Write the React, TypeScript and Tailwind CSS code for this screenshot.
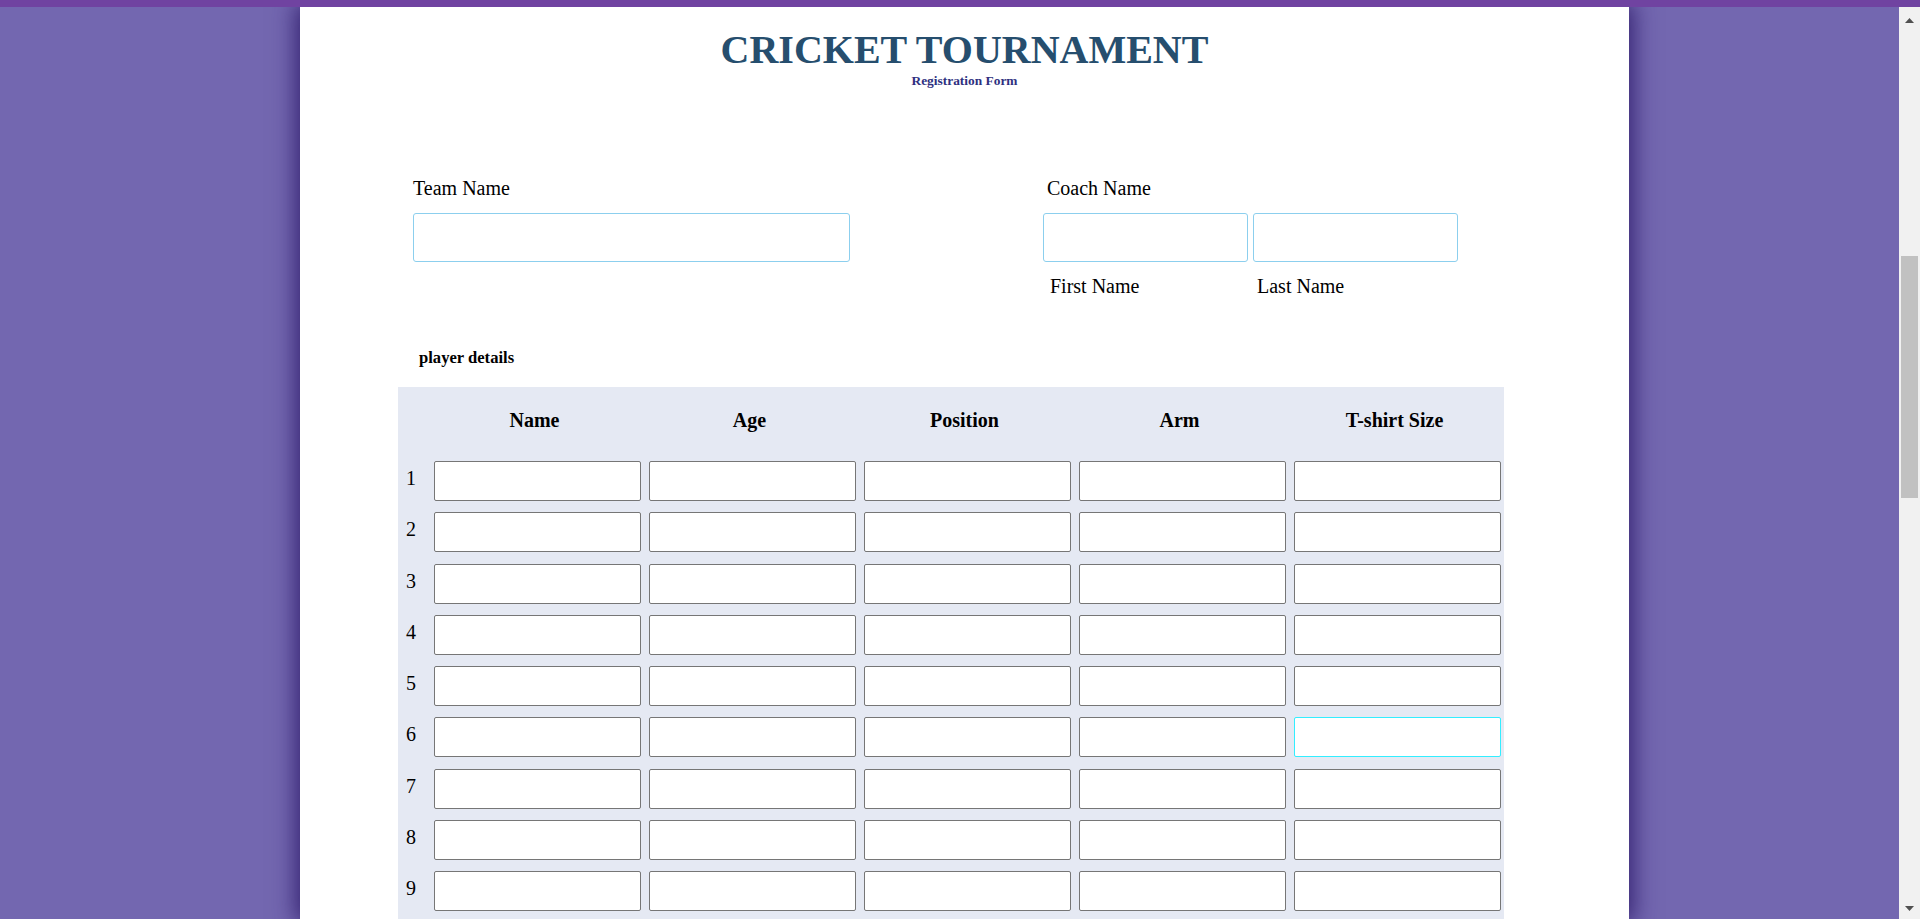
import React from "react";

const columns = ["Name", "Age", "Position", "Arm", "T-shirt Size"];
const rows = [1, 2, 3, 4, 5, 6, 7, 8, 9];

function Scrollbar() {
  return (
    <div className="relative w-[21px] shrink-0 bg-[#f1f1f1]">
      {/* up arrow */}
      <svg className="absolute left-[6px] top-[11px]" width="9" height="5" viewBox="0 0 9 5">
        <polygon points="0,5 4.5,0 9,5" fill="#505050" />
      </svg>
      {/* thumb */}
      <div className="absolute left-[2px] top-[249px] h-[242px] w-[17px] bg-[#c1c1c1]" />
      {/* down arrow */}
      <svg className="absolute bottom-[8px] left-[6px]" width="9" height="5" viewBox="0 0 9 5">
        <polygon points="0,0 9,0 4.5,5" fill="#505050" />
      </svg>
    </div>
  );
}

export default function App() {
  return (
    <div className="flex h-screen w-full flex-col overflow-hidden bg-[#7367b0] font-['Liberation_Serif',serif] text-black">
      {/* Top bar */}
      <div className="relative z-10 h-[7px] w-full shrink-0 bg-[#7043a1]" />

      <div className="flex min-h-0 flex-1">
        <div className="min-w-0 flex-1">
          {/* Card */}
          <div className="ml-[300px] h-full w-[1329px] bg-white pt-[20px] shadow-[0_0_22px_4px_rgba(40,20,100,0.85)]">
            <h1 className="text-center text-[40px] font-bold leading-[46px] text-[#264e6e]">
              CRICKET TOURNAMENT
            </h1>
            <h6 className="text-center text-[13.4px] font-bold leading-[15px] text-[#2e3080]">
              Registration Form
            </h6>

            {/* Team / Coach */}
            <div className="mt-[89px] flex items-start">
              <div className="ml-[113px] w-[437px]">
                <p className="text-[20px] leading-[23px]">Team Name</p>
                <input
                  type="text"
                  className="mt-[13px] block h-[49px] w-[437px] rounded-[3px] border border-[#8ccfee] bg-white outline-none"
                />
              </div>

              <div className="ml-[193px]">
                <p className="pl-[4px] text-[20px] leading-[23px]">Coach Name</p>
                <div className="mt-[13px] flex gap-[5px]">
                  <input
                    type="text"
                    className="block h-[49px] w-[205px] rounded-[3px] border border-[#8ccfee] bg-white outline-none"
                  />
                  <input
                    type="text"
                    className="block h-[49px] w-[205px] rounded-[3px] border border-[#8ccfee] bg-white outline-none"
                  />
                </div>
                <div className="mt-[13px] flex text-[20px] leading-[23px]">
                  <span className="w-[210px] pl-[7px]">First Name</span>
                  <span className="pl-[4px]">Last Name</span>
                </div>
              </div>
            </div>

            {/* Player details */}
            <h5 className="ml-[119px] mt-[50px] text-[16.6px] font-bold leading-[19px]">player details</h5>

            <div className="ml-[98px] mt-[20px] w-[1106px] bg-[#e5e9f3] pb-[8px] pl-[8px]">
              <div className="grid grid-cols-[20px_repeat(5,207px)] gap-x-[8px]">
                <div className="h-[74px]" />
                {columns.map((col) => (
                  <div key={col} className="h-[74px] pr-[6px] pt-[22px] text-center text-[20px] font-bold leading-[23px]">
                    {col}
                  </div>
                ))}
              </div>

              <div className="grid grid-cols-[20px_repeat(5,207px)] gap-x-[8px] gap-y-[11.25px]">
                {rows.map((n) => (
                  <React.Fragment key={n}>
                    <div className="flex h-[40px] items-center pb-[5px] text-[20px] leading-[23px]">{n}</div>
                    {columns.map((col, ci) => (
                      <input
                        key={col}
                        type="text"
                        className={
                          n === 6 && ci === 4
                            ? "block h-[40px] w-[207px] rounded-[2px] border border-[#33eeff] bg-white outline-none"
                            : "block h-[40px] w-[207px] rounded-[2px] border border-[#767676] bg-white outline-none"
                        }
                      />
                    ))}
                  </React.Fragment>
                ))}
              </div>
            </div>
          </div>
        </div>

        <Scrollbar />
      </div>
    </div>
  );
}
